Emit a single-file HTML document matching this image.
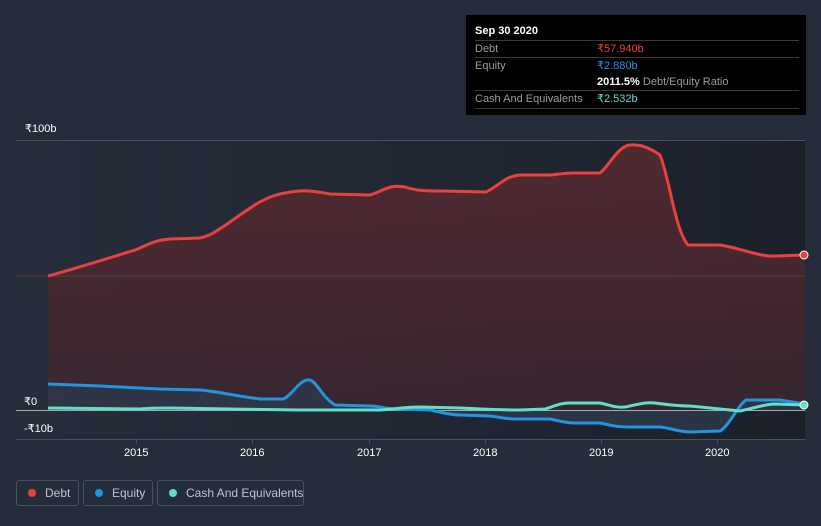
<!DOCTYPE html>
<html><head><meta charset="utf-8"><style>
html,body{margin:0;width:821px;height:526px;overflow:hidden}
body{background:#262d3a;font-family:"Liberation Sans",sans-serif;position:relative}
.tt{position:absolute;left:466px;top:15px;width:340px;height:100px;background:#000;color:#fff;font-size:11px}
.tt .h{position:absolute;left:9px;top:10px;font-weight:bold}
.row{position:absolute;left:9px;width:324px;border-top:1px solid #3a3a3a;height:17px;line-height:17px;color:#9a9a9a;white-space:nowrap}
.row span{position:absolute;left:122px}
.leg{position:absolute;top:480px;height:26px;border:1px solid #4a5260;border-radius:3px;color:#bfc4cc;font-size:12px;line-height:24px;box-sizing:border-box;white-space:nowrap}
.leg i{position:absolute;left:11px;top:8px;width:8px;height:8px;border-radius:50%}
.ax{position:absolute;color:#fff;font-size:11px;white-space:nowrap}
</style></head><body>
<svg width="821" height="526" style="position:absolute;left:0;top:0">
<defs>
<linearGradient id="bg" x1="0" x2="1"><stop offset="0" stop-color="#262d3a"/><stop offset="0.7" stop-color="#1f2530"/><stop offset="1" stop-color="#1b2029"/></linearGradient>
<linearGradient id="df" x1="0" y1="0" x2="0" y2="1"><stop offset="0" stop-color="#5a2a30" stop-opacity=".85"/><stop offset="1" stop-color="#3a2630" stop-opacity=".85"/></linearGradient>
</defs>
<rect x="16" y="141" width="789" height="299" fill="url(#bg)"/>
<line x1="16" y1="140.5" x2="805" y2="140.5" stroke="#4a5260"/>
<line x1="16" y1="439.5" x2="805" y2="439.5" stroke="#4a5260"/>
<path d="M48,276 C70,270 90,264 135,250 C150,244 155,240 170,239 L200,238 C210,236 215,232 230,222 C250,208 265,196 285,193 C300,190 310,190 330,194 L370,195 C385,190 390,184 405,187 C415,190 420,191 440,191 L486,192 C500,185 505,176 520,175 L550,175 C560,174 565,173 575,173 L600,173 C610,165 618,146 630,145 C640,144 650,148 660,155 C670,180 675,230 688,245 L720,245 C740,248 760,257 775,256 L805,255 L805,410 L48,410 Z" fill="url(#df)"/>
<line x1="16" y1="276" x2="805" y2="276" stroke="#5a3a42" stroke-width="1"/>
<path d="M48,384 L100,386 L160,389 L200,390 C215,391 230,395 260,399 L283,399 C292,396 300,378 310,380 C318,383 320,395 335,405 L370,406 C380,406 385,409 395,409 L430,410 C440,412 450,415 460,415 L490,416 C500,417 505,419 515,419 L550,419 C560,421 565,423 575,423 L600,423 C610,425 615,427 630,427 L660,427 C670,428 680,432 690,432 L720,431 C730,425 738,405 746,400 L780,400 L805,404 L805,410 L48,410 Z" fill="#2e3a4c" opacity=".8"/>
<line x1="16" y1="410.5" x2="805" y2="410.5" stroke="#aaa" stroke-width="1"/>
<path d="M48,276 C70,270 90,264 135,250 C150,244 155,240 170,239 L200,238 C210,236 215,232 230,222 C250,208 265,196 285,193 C300,190 310,190 330,194 L370,195 C385,190 390,184 405,187 C415,190 420,191 440,191 L486,192 C500,185 505,176 520,175 L550,175 C560,174 565,173 575,173 L600,173 C610,165 618,146 630,145 C640,144 650,148 660,155 C670,180 675,230 688,245 L720,245 C740,248 760,257 775,256 L805,255" fill="none" stroke="#e8413f" stroke-width="3"/>
<path d="M48,384 L100,386 L160,389 L200,390 C215,391 230,395 260,399 L283,399 C292,396 300,378 310,380 C318,383 320,395 335,405 L370,406 C380,406 385,409 395,409 L430,410 C440,412 450,415 460,415 L490,416 C500,417 505,419 515,419 L550,419 C560,421 565,423 575,423 L600,423 C610,425 615,427 630,427 L660,427 C670,428 680,432 690,432 L720,431 C730,425 738,405 746,400 L780,400 L805,404" fill="none" stroke="#2394e0" stroke-width="3"/>
<path d="M48,408 L140,409 C150,408 155,408 170,408 L230,409 L300,410 L380,410 C395,409 405,407 420,407 L460,408 C480,409 500,410 520,410 L545,409 C555,406 560,403 570,403 L600,403 C610,405 615,408 625,407 C640,404 645,402 655,403 C670,405 680,406 690,406 L740,411 C755,408 765,404 775,404 L805,405" fill="none" stroke="#5fe0c7" stroke-width="3"/>
<circle cx="804" cy="255" r="4" fill="#e8413f" stroke="#fff" stroke-width="1"/>
<circle cx="804" cy="405" r="4" fill="#5fe0c7" stroke="#fff" stroke-width="1"/>
<g stroke="#4a5260"><line x1="136.5" y1="440" x2="136.5" y2="444"/><line x1="252.5" y1="440" x2="252.5" y2="444"/><line x1="369.5" y1="440" x2="369.5" y2="444"/><line x1="485.5" y1="440" x2="485.5" y2="444"/><line x1="601.5" y1="440" x2="601.5" y2="444"/><line x1="717.5" y1="440" x2="717.5" y2="444"/></g>
</svg>
<div class="ax" style="left:25px;top:122px">₹100b</div>
<div class="ax" style="left:24px;top:395px">₹0</div>
<div class="ax" style="left:24px;top:422px">-₹10b</div>
<div class="ax" style="left:124px;top:447px">2015</div>
<div class="ax" style="left:240px;top:447px">2016</div>
<div class="ax" style="left:357px;top:447px">2017</div>
<div class="ax" style="left:473px;top:447px">2018</div>
<div class="ax" style="left:589px;top:447px">2019</div>
<div class="ax" style="left:705px;top:447px">2020</div>
<div class="tt">
<div class="h">Sep 30 2020</div>
<div class="row" style="top:25px">Debt<span style="color:#e8413f">₹57.940b</span></div>
<div class="row" style="top:42px">Equity<span style="color:#2394e0">₹2.880b</span></div>
<div class="row" style="top:59px;border-top:none"><span style="color:#9a9a9a"><b style="color:#fff">2011.5%</b> Debt/Equity Ratio</span></div>
<div class="row" style="top:75px;border-bottom:1px solid #3a3a3a">Cash And Equivalents<span style="color:#5fe0c7">₹2.532b</span></div>
</div>
<div class="leg" style="left:16px;width:63px"><i style="background:#e8413f"></i><span style="position:absolute;left:28px">Debt</span></div>
<div class="leg" style="left:83px;width:70px"><i style="background:#2394e0"></i><span style="position:absolute;left:28px">Equity</span></div>
<div class="leg" style="left:157px;width:147px"><i style="background:#5fe0c7"></i><span style="position:absolute;left:28px">Cash And Equivalents</span></div>
</body></html>
